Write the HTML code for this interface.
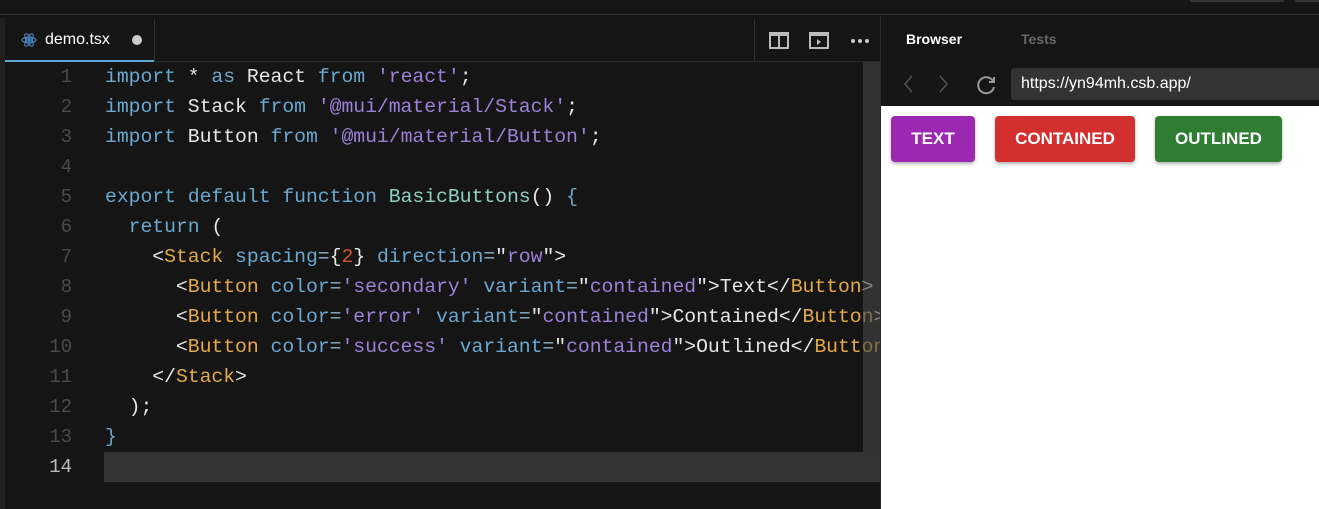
<!DOCTYPE html>
<html><head><meta charset="utf-8"><style>
*{margin:0;padding:0;box-sizing:border-box}
body{width:1319px;height:509px;background:#151515;overflow:hidden;position:relative;font-family:"Liberation Sans",sans-serif}
.abs{position:absolute}
.code{font-family:"Liberation Mono","DejaVu Sans Mono",monospace;font-size:19.8px;white-space:pre;color:#e6e6e6}
.ln{position:absolute;left:0;width:72px;text-align:right;color:#4a4a4a;font-family:"Liberation Mono",monospace;font-size:19px}
.k{color:#6aa8d0}.s{color:#9d80d8}.t{color:#e3a94b}.n{color:#d5513a}.p{color:#8ab4c8}
.btn{position:absolute;top:116px;height:46px;border-radius:4px;color:#fff;font-weight:bold;font-size:17px;display:flex;align-items:center;justify-content:center;box-shadow:0 2px 3px rgba(0,0,0,.3)}
</style></head><body>
<div class="abs" style="left:0;top:0;width:1319px;height:15px;background:#151515;border-bottom:1px solid #333"></div>
<div class="abs" style="left:1190px;top:0;width:94px;height:2px;background:#333"></div>
<div class="abs" style="left:1295px;top:0;width:24px;height:2px;background:#333"></div>
<div class="abs" style="left:0;top:18px;width:5px;height:491px;background:#202020"></div>
<div class="abs" style="left:5px;top:61px;width:875px;height:1px;background:#2b2b2b"></div>
<div class="abs" style="left:154px;top:19px;width:1px;height:42px;background:#2e2e2e"></div>
<div class="abs" style="left:754px;top:19px;width:1px;height:42px;background:#2e2e2e"></div>
<div class="abs" style="left:5px;top:60px;width:149px;height:2px;background:#5fa8d8"></div>
<svg class="abs" style="left:21px;top:32px" width="16" height="16" viewBox="0 0 16 16" fill="none" stroke="#4f8fd0" stroke-width="1"><ellipse cx="8" cy="8" rx="7" ry="2.8"/><ellipse cx="8" cy="8" rx="7" ry="2.8" transform="rotate(60 8 8)"/><ellipse cx="8" cy="8" rx="7" ry="2.8" transform="rotate(-60 8 8)"/><circle cx="8" cy="8" r="1.2" fill="#4f8fd0"/></svg>
<div class="abs" style="left:45px;top:31px;color:#fff;font-size:16px">demo.tsx</div>
<div class="abs" style="left:132px;top:35px;width:10px;height:10px;border-radius:50%;background:#ccc"></div>
<svg class="abs" style="left:769px;top:32px" width="20" height="17" viewBox="0 0 20 17" fill="none" stroke="#bbb" stroke-width="2"><rect x="1" y="1" width="18" height="15"/><path d="M10 1v15M1 3h18"/></svg>
<svg class="abs" style="left:809px;top:32px" width="20" height="17" viewBox="0 0 20 17" fill="none" stroke="#bbb" stroke-width="2"><rect x="1" y="1" width="18" height="15"/><path d="M1 3h18"/><path d="M8 7l4 3-4 3z" fill="#bbb" stroke="none"/></svg>
<div class="abs" style="left:851px;top:39px;width:4px;height:4px;border-radius:50%;background:#ccc;box-shadow:7px 0 #ccc,14px 0 #ccc"></div>
<div class="abs" style="left:104px;top:452px;width:776px;height:30px;background:#333"></div>
<div class="ln" style="top:66px">1</div><div class="ln" style="top:96px">2</div><div class="ln" style="top:126px">3</div><div class="ln" style="top:156px">4</div><div class="ln" style="top:186px">5</div><div class="ln" style="top:216px">6</div><div class="ln" style="top:246px">7</div><div class="ln" style="top:276px">8</div><div class="ln" style="top:306px">9</div><div class="ln" style="top:336px">10</div><div class="ln" style="top:366px">11</div><div class="ln" style="top:396px">12</div><div class="ln" style="top:426px">13</div><div class="ln" style="top:456px;color:#bbb">14</div>
<div class="abs" style="left:105px;top:62px;width:775px;height:440px;overflow:hidden">
<div class="code" style="line-height:30px;letter-spacing:-0.05px"><span class="k">import</span> * <span class="k">as</span> React <span class="k">from</span> <span class="s">'react'</span>;
<span class="k">import</span> Stack <span class="k">from</span> <span class="s">'@mui/material/Stack'</span>;
<span class="k">import</span> Button <span class="k">from</span> <span class="s">'@mui/material/Button'</span>;

<span class="k">export</span> <span class="k">default</span> <span class="k">function</span> <span style="color:#8fd1c0">BasicButtons</span>() <span class="k">{</span>
  <span class="k">return</span> (
    &lt;<span class="t">Stack</span> <span class="k">spacing</span><span class="p">=</span>{<span class="n">2</span>} <span class="k">direction</span><span class="p">=</span>"<span class="s">row</span>"&gt;
      &lt;<span class="t">Button</span> <span class="k">color</span><span class="p">=</span><span class="s">'secondary'</span> <span class="k">variant</span><span class="p">=</span>"<span class="s">contained</span>"&gt;Text&lt;/<span class="t">Button</span>&gt;
      &lt;<span class="t">Button</span> <span class="k">color</span><span class="p">=</span><span class="s">'error'</span> <span class="k">variant</span><span class="p">=</span>"<span class="s">contained</span>"&gt;Contained&lt;/<span class="t">Button</span>&gt;
      &lt;<span class="t">Button</span> <span class="k">color</span><span class="p">=</span><span class="s">'success'</span> <span class="k">variant</span><span class="p">=</span>"<span class="s">contained</span>"&gt;Outlined&lt;/<span class="t">Button</span>&gt;
    &lt;/<span class="t">Stack</span>&gt;
  );
<span class="k">}</span>
</div></div>
<div class="abs" style="left:863px;top:62px;width:17px;height:390px;background:rgba(70,70,70,.6)"></div>
<div class="abs" style="left:880px;top:16px;width:1px;height:493px;background:#2a2a2a"></div>
<div class="abs" style="left:906px;top:31px;color:#fff;font-size:14px;font-weight:bold">Browser</div>
<div class="abs" style="left:1021px;top:31px;color:#666;font-size:14px;font-weight:bold">Tests</div>
<svg class="abs" style="left:898px;top:74px" width="80" height="20" fill="none" stroke-width="1.5"><path d="M14 2L7 10l7 8" stroke="#555"/><path d="M42 2l7 8-7 8" stroke="#555"/></svg>
<svg class="abs" style="left:976px;top:74px" width="22" height="22" viewBox="0 0 22 22" fill="none" stroke="#999" stroke-width="2"><path d="M17 7A8 8 0 1 0 18 13"/><path d="M18 3v5h-5"/></svg>
<div class="abs" style="left:1011px;top:68px;width:308px;height:32px;background:#333;border-radius:3px 0 0 3px"></div>
<div class="abs" style="left:1021px;top:75px;color:#fff;font-size:16px">https://yn94mh.csb.app/</div>
<div class="abs" style="left:881px;top:106px;width:438px;height:403px;background:#fff"></div>
<div class="btn" style="left:891px;width:84px;background:#9c27b0">TEXT</div>
<div class="btn" style="left:995px;width:140px;background:#d32f2f">CONTAINED</div>
<div class="btn" style="left:1155px;width:127px;background:#2e7d32">OUTLINED</div>
</body></html>
